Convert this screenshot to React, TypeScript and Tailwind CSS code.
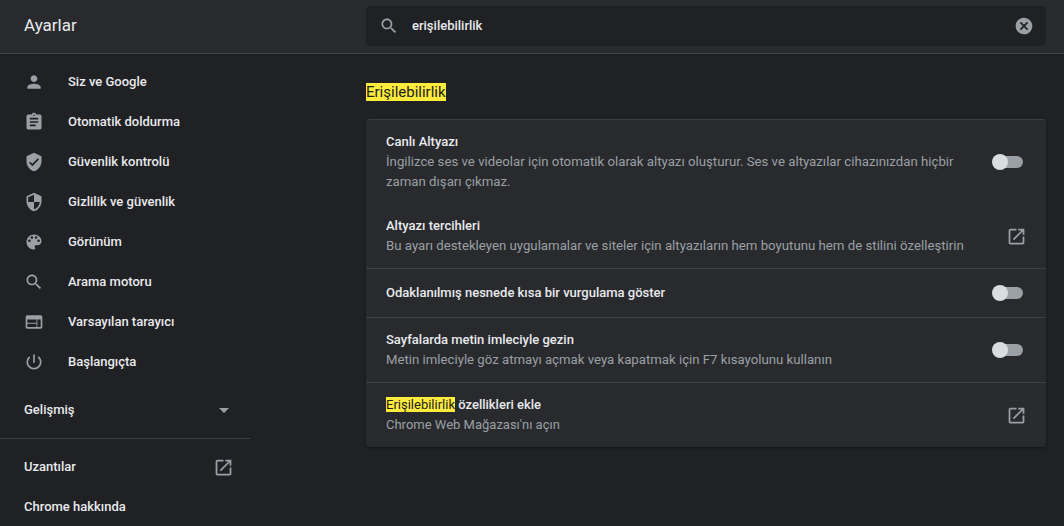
const paths = {
  person: "M12 12c2.21 0 4-1.79 4-4s-1.79-4-4-4-4 1.79-4 4 1.79 4 4 4zm0 2c-2.67 0-8 1.34-8 4v2h16v-2c0-2.66-5.33-4-8-4z",
  assignment: "M19 3h-4.18C14.4 1.84 13.3 1 12 1c-1.3 0-2.4.84-2.82 2H5c-1.1 0-2 .9-2 2v14c0 1.1.9 2 2 2h14c1.1 0 2-.9 2-2V5c0-1.1-.9-2-2-2zm-7 0c.55 0 1 .45 1 1s-.45 1-1 1-1-.45-1-1 .45-1 1-1zm2 14H7v-2h7v2zm3-4H7v-2h10v2zm0-4H7V7h10v2z",
  verified: "M12 1L3 5v6c0 5.55 3.84 10.74 9 12 5.16-1.26 9-6.45 9-12V5l-9-4zm-2 16l-4-4 1.41-1.41L10 14.17l6.59-6.59L18 9l-8 8z",
  security: "M12 1L3 5v6c0 5.55 3.84 10.74 9 12 5.16-1.26 9-6.45 9-12V5l-9-4zm0 10.99h7c-.53 4.12-3.28 7.79-7 8.94V12H5V6.3l7-3.11v8.8z",
  palette: "M12 3c-4.97 0-9 4.03-9 9s4.03 9 9 9c.83 0 1.5-.67 1.5-1.5 0-.39-.15-.74-.39-1.01-.23-.26-.38-.61-.38-.99 0-.83.67-1.5 1.5-1.5H16c2.76 0 5-2.24 5-5 0-4.42-4.03-8-9-8zm-5.5 9c-.83 0-1.5-.67-1.5-1.5S5.67 9 6.5 9 8 9.67 8 10.5 7.33 12 6.5 12zm3-4C8.67 8 8 7.33 8 6.5S8.67 5 9.5 5s1.5.67 1.5 1.5S10.33 8 9.5 8zm5 0c-.83 0-1.5-.67-1.5-1.5S13.67 5 14.5 5s1.5.67 1.5 1.5S15.33 8 14.5 8zm3 4c-.83 0-1.5-.67-1.5-1.5S16.67 9 17.5 9s1.5.67 1.5 1.5-.67 1.5-1.5 1.5z",
  search: "M15.5 14h-.79l-.28-.27C15.41 12.59 16 11.11 16 9.5 16 5.91 13.09 3 9.5 3S3 5.91 3 9.5 5.91 16 9.5 16c1.61 0 3.09-.59 4.23-1.57l.27.28v.79l5 4.99L20.49 19l-4.99-5zm-6 0C7.01 14 5 11.99 5 9.5S7.01 5 9.5 5 14 7.01 14 9.5 11.99 14 9.5 14z",
  web: "M22 6c0-1.1-.9-2-2-2H4c-1.1 0-2 .9-2 2v12c0 1.1.9 2 2 2h16c1.1 0 2-.9 2-2V6zm-7 12H4v-4h11v4zm0-5H4V9h11v4zm5 5h-4V9h4v9z",
  power: "M13 3h-2v10h2V3zm4.83 2.17l-1.42 1.42C17.99 7.86 19 9.81 19 12c0 3.87-3.13 7-7 7s-7-3.13-7-7c0-2.19 1.01-4.14 2.58-5.42L6.17 5.17C4.23 6.82 3 9.26 3 12c0 4.97 4.03 9 9 9s9-4.03 9-9c0-2.74-1.23-5.18-3.17-6.83z",
  open: "M19 19H5V5h7V3H5c-1.11 0-2 .9-2 2v14c0 1.1.89 2 2 2h14c1.1 0 2-.9 2-2v-7h-2v7zM14 3v2h3.59l-9.83 9.83 1.41 1.41L19 6.41V10h2V3h-7z",
  cancel: "M12 2C6.47 2 2 6.47 2 12s4.47 10 10 10 10-4.47 10-10S17.53 2 12 2zm5 13.59L15.59 17 12 13.41 8.41 17 7 15.59 10.59 12 7 8.41 8.41 7 12 10.59 15.59 7 17 8.41 13.41 12 17 15.59z",
}

function Icon({ d, className }: { d: string; className: string }) {
  return (
    <svg viewBox="0 0 24 24" fill="currentColor" className={className}>
      <path d={d} />
    </svg>
  )
}

const navItems = [
  { label: "Siz ve Google", icon: paths.person },
  { label: "Otomatik doldurma", icon: paths.assignment },
  { label: "Güvenlik kontrolü", icon: paths.verified },
  { label: "Gizlilik ve güvenlik", icon: paths.security },
  { label: "Görünüm", icon: paths.palette },
  { label: "Arama motoru", icon: paths.search },
  { label: "Varsayılan tarayıcı", icon: paths.web },
  { label: "Başlangıçta", icon: paths.power },
]

function Toggle() {
  return (
    <div className="relative h-[12px] w-[30px] rounded-full bg-[#9aa0a6] shrink-0">
      <div className="absolute left-[-1px] top-[-2px] h-4 w-4 rounded-full bg-[#dadce0]" />
    </div>
  )
}

function OpenLink() {
  return <Icon d={paths.open} className="h-[21px] w-[21px] text-[#9aa0a6] shrink-0" />
}

export default function App() {
  return (
    <div className="h-[526px] w-[1064px] overflow-hidden bg-[#202124] font-['Roboto',sans-serif] text-[13px] leading-5 text-[#e8eaed]">
      {/* Header */}
      <header className="flex h-[54px] items-center border-b border-[#3f4043] bg-[#292a2d] pb-px">
        <h1 className="w-[366px] pb-[2px] pl-6 text-[17px] text-[#e8eaed]">Ayarlar</h1>
        <div className="flex h-10 w-[680px] items-center rounded bg-[#202124] pl-[13px] pr-[12px]">
          <Icon d={paths.search} className="h-5 w-5 text-[#9aa0a6]" />
          <span className="ml-[13px] flex-1 font-medium">erişilebilirlik</span>
          <Icon d={paths.cancel} className="h-5 w-5 text-[#9aa0a6]" />
        </div>
      </header>

      <div className="flex">
        {/* Sidebar */}
        <nav className="w-[366px] shrink-0 pt-2">
          <div className="w-[250px]">
            {navItems.map((item) => (
              <div key={item.label} className="flex h-10 items-center pl-6 font-medium">
                <Icon d={item.icon} className="h-5 w-5 text-[#9aa0a6]" />
                <span className="ml-6">{item.label}</span>
              </div>
            ))}
            <div className="mt-2 flex h-10 items-center justify-between pl-6 pr-[21px] font-medium">
              <span>Gelişmiş</span>
              <div className="h-0 w-0 border-x-[5px] border-t-[5px] border-x-transparent border-t-[#9aa0a6]" />
            </div>
            <div className="mt-2 border-t border-[#3f4043]" />
            <div className="mt-2 flex h-10 items-center justify-between pl-6 pr-[16px] font-medium">
              <span>Uzantılar</span>
              <OpenLink />
            </div>
            <div className="flex h-10 items-center pl-6 font-medium">Chrome hakkında</div>
          </div>
        </nav>

        {/* Main */}
        <main className="w-[680px]">
          <h2 className="mt-[28px] mb-[17px] h-5 text-[15px] text-[#e8eaed]">
            <mark className="bg-[#ffeb3b] text-[#202124]">Erişilebilirlik</mark>
          </h2>
          <section className="overflow-hidden rounded border-t border-[#3f4043] bg-[#292a2d] shadow-[0_1px_3px_rgba(0,0,0,0.4)]">
            <div className="flex items-center justify-between pl-5 pr-[23px] py-3">
              <div className="w-[590px]">
                <div className="font-medium">Canlı Altyazı</div>
                <div className="text-[13.23px] text-[#9aa0a6]">
                  İngilizce ses ve videolar için otomatik olarak altyazı oluşturur. Ses ve altyazılar cihazınızdan hiçbir
                  zaman dışarı çıkmaz.
                </div>
              </div>
              <Toggle />
            </div>
            <div className="flex items-center justify-between pl-5 pr-[19px] py-3">
              <div>
                <div className="font-medium">Altyazı tercihleri</div>
                <div className="text-[13.23px] text-[#9aa0a6]">
                  Bu ayarı destekleyen uygulamalar ve siteler için altyazıların hem boyutunu hem de stilini özelleştirin
                </div>
              </div>
              <OpenLink />
            </div>
            <div className="flex h-[49px] items-center justify-between border-t border-[#3f4043] pl-5 pr-[23px] pb-px">
              <div className="font-medium">Odaklanılmış nesnede kısa bir vurgulama göster</div>
              <Toggle />
            </div>
            <div className="flex items-center justify-between border-t border-[#3f4043] pl-5 pr-[23px] py-3">
              <div>
                <div className="font-medium">Sayfalarda metin imleciyle gezin</div>
                <div className="text-[13.2px] text-[#9aa0a6]">
                  Metin imleciyle göz atmayı açmak veya kapatmak için F7 kısayolunu kullanın
                </div>
              </div>
              <Toggle />
            </div>
            <div className="flex items-center justify-between border-t border-[#3f4043] pl-5 pr-[19px] py-3">
              <div>
                <div className="font-medium">
                  <mark className="bg-[#ffeb3b] font-normal text-[#202124]">Erişilebilirlik</mark> özellikleri ekle
                </div>
                <div className="text-[13px] text-[#9aa0a6]">Chrome Web Mağazası'nı açın</div>
              </div>
              <OpenLink />
            </div>
          </section>
        </main>
      </div>
    </div>
  )
}
